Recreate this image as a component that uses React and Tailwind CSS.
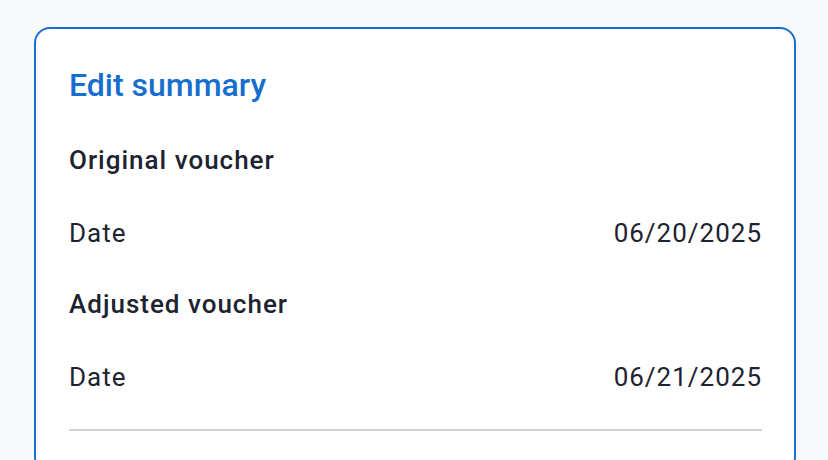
const rows = [
    { heading: 'Original voucher', label: 'Date', value: '06/20/2025' },
    { heading: 'Adjusted voucher', label: 'Date', value: '06/21/2025' },
]

export default function App() {
    return (
        <div className="min-h-screen w-full bg-[#f8f9fb] pl-[34px] pr-[32px] pt-[27px] overflow-hidden" style={{ fontFamily: 'Roboto, "Liberation Sans", sans-serif' }}>
            <div className="rounded-[16px] border-2 border-[#166fcf] bg-white pl-[33px] pr-[32px] pt-[36px] pb-[40px]">
                <h2 className="text-[32px] leading-[40px] font-medium text-[#166fcf]">Edit summary</h2>
                <div className="mt-[39px] flex flex-col gap-[39px] text-[26px] leading-[32px] tracking-[1px] text-[#1d2330]">
                    {rows.map((row, idx) => (
                        <div key={idx} className="flex flex-col gap-[41px]">
                            <div className="font-medium">{row.heading}</div>
                            <div className="flex items-center justify-between">
                                <span>{row.label}</span>
                                <span>{row.value}</span>
                            </div>
                        </div>
                    ))}
                </div>
                <div className="mt-[36px] h-[2px] bg-[#cfd3d8]" />
            </div>
        </div>
    )
}
